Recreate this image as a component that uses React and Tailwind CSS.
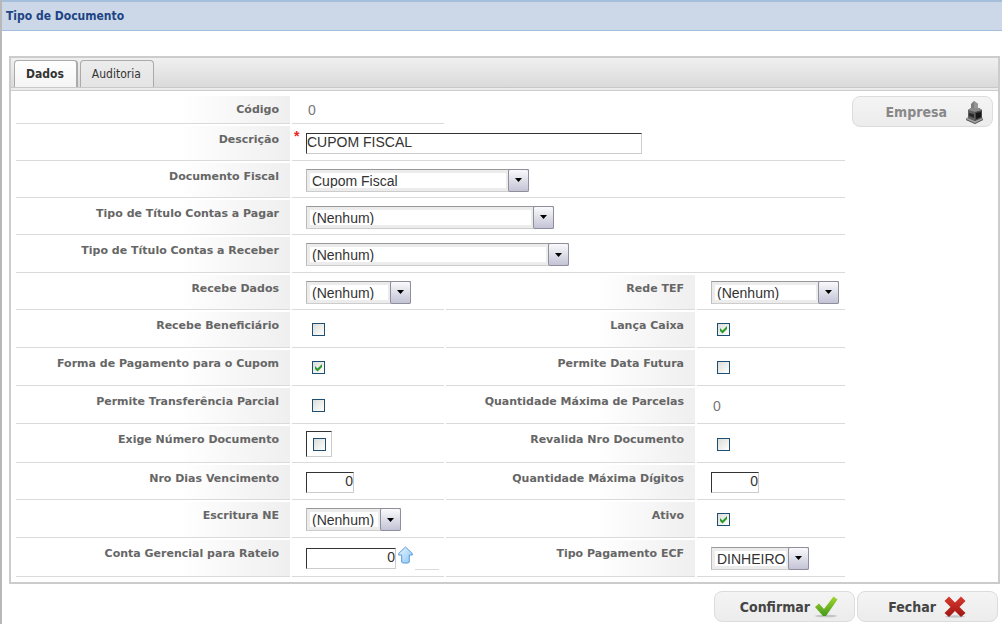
import React, { useState } from 'react';
import clsx from 'clsx';

const Row = ({ height = 'min-h-[35px]', children }) => (
  <div
    className={clsx(
      'grid grid-cols-[minmax(0,274fr)_minmax(0,152fr)_minmax(0,249fr)_minmax(0,148fr)] gap-x-0.5',
      height
    )}
  >
    {children}
  </div>
);

const Label = ({ htmlFor, children }) => (
  <label
    htmlFor={htmlFor}
    className="border-b border-[#dadada] bg-linear-to-r from-white from-60% to-[#efefef] pt-1.5 pr-[11px] text-right font-['Verdana','DejaVu_Sans',sans-serif] text-[11px] leading-4 font-bold whitespace-nowrap text-[#666]"
  >
    {children}
  </label>
);

const Cell = ({ wide, children }) => (
  <div
    className={clsx(
      'relative flex items-center border-b border-[#dadada] pl-3.5',
      wide && 'col-span-3'
    )}
  >
    {children}
  </div>
);

const ReadOnly = ({ id, children }) => (
  <output id={id} className="px-0.5 text-[#777]">
    {children}
  </output>
);

const TextInput = ({ id, value, className }) => (
  <input
    id={id}
    type="text"
    defaultValue={value}
    className={clsx(
      'h-[21px] border border-t-[#333] border-r-[#ccc] border-b-[#ccc] border-l-[#333] bg-white pb-0.5 outline-none',
      className
    )}
  />
);

const Select = ({ id, value, className }) => (
  <span
    className={clsx(
      'relative block h-[23px] border border-[#ccc] border-t-[#999] border-l-[#bbb]',
      className
    )}
  >
    <select
      id={id}
      defaultValue={value}
      className="block h-full w-full appearance-none border-[3px] border-r-[22px] border-[#ececec] bg-white pl-0.5 leading-4 outline-none"
    >
      <option>{value}</option>
    </select>
    <span className="pointer-events-none absolute -top-px -right-px flex h-[23px] w-[21px] items-center justify-center rounded-xs border border-[#8f8f9c] bg-linear-to-b from-[#fafafc] to-[#c3c3d6]">
      <svg width="7" height="4" viewBox="0 0 7 4" aria-hidden="true">
        <path d="M0 0h7L3.5 4z" fill="#000" />
      </svg>
    </span>
  </span>
);

const Checkbox = ({ id, checked, className = 'ml-1.5' }) => (
  <span className={clsx('relative block h-[13px] w-[13px]', className)}>
    <input
      id={id}
      type="checkbox"
      defaultChecked={checked}
      className="peer block h-[13px] w-[13px] appearance-none border border-[#1c4f73] bg-linear-to-br from-[#dcdcd7] to-white"
    />
    <svg
      viewBox="0 0 13 13"
      className="pointer-events-none absolute inset-0 hidden h-[13px] w-[13px] peer-checked:block"
      aria-hidden="true"
    >
      <path d="M3 5v3l2.5 2.5L10 6V3L5.5 7.5z" fill="#2c9a2c" />
    </svg>
  </span>
);

const ActionButton = ({ children, className }) => (
  <button
    type="button"
    className={clsx(
      "flex h-[31px] w-[141px] shrink-0 items-center rounded-lg border border-[#dcdcdc] bg-linear-to-b from-[#f4f4f4] to-[#ececec] font-['Tahoma','DejaVu_Sans_Condensed','DejaVu_Sans',sans-serif] text-sm font-bold",
      className
    )}
  >
    {children}
  </button>
);

const BuildingIcon = () => (
  <svg width="20" height="24" viewBox="0 0 20 24" aria-hidden="true">
    <path d="M1 18l9-4 8 4v2l-8 4-9-4z" fill="#a2a2a2" />
    <path d="M6 4l3-3 4 3v7H6z" fill="#7d7d7d" />
    <path d="M9 1l4 3v7H9z" fill="#969696" />
    <path d="M3 10l3-2h8l3 2v8l-7 3-7-3z" fill="#484848" />
    <path d="M3 10l7 2v9l-7-3z" fill="#606060" />
    <path d="M11 13l5-1v5l-5 2z" fill="#161616" />
    <path d="M4 13l5 1v4l-5-2z" fill="#2b2b2b" />
    <path d="M3 10l3-2h8l3 2-7 2z" fill="#8b8b8b" />
    <path d="M1 19l9 4 8-4v1l-8 4-9-4z" fill="#5a5a5a" />
  </svg>
);

const CheckIcon = () => (
  <svg width="24" height="22" viewBox="0 0 24 22" aria-hidden="true">
    <defs>
      <linearGradient id="ok" x1="0" y1="0" x2="0" y2="1">
        <stop offset="0" stopColor="#a4d62f" />
        <stop offset="1" stopColor="#459a1b" />
      </linearGradient>
    </defs>
    <ellipse cx="12" cy="20" rx="11" ry="1.3" fill="#c4c4c4" />
    <path d="M1 11l4-3.500 5 5.500L19.500 0.500l4 3L12 20H9z" fill="url(#ok)" />
  </svg>
);

const CloseIcon = () => (
  <svg width="22" height="22" viewBox="0 0 22 22" aria-hidden="true">
    <defs>
      <linearGradient id="no" x1="0" y1="0" x2="0" y2="1">
        <stop offset="0" stopColor="#d93a30" />
        <stop offset="1" stopColor="#9c1512" />
      </linearGradient>
    </defs>
    <ellipse cx="11" cy="20.5" rx="10" ry="1.2" fill="#c4c4c4" />
    <path
      d="M5 0.500l6 6 6-6 4.500 4.500-6 6 6 6-4.500 4-6-6-6 6L0.500 17l6-6-6-6z"
      fill="url(#no)"
    />
  </svg>
);

const UpIcon = () => (
  <svg width="15" height="18" viewBox="0 0 15 18" aria-hidden="true">
    <defs>
      <linearGradient id="up" x1="0" y1="0" x2="1" y2="1">
        <stop offset="0" stopColor="#eaf6ff" />
        <stop offset="1" stopColor="#8cc6f4" />
      </linearGradient>
    </defs>
    <path
      d="M7.500 1L14.300 7.500V9h-3V16l-1 1H4.700l-1-1V9H0.700V7.500z"
      fill="url(#up)"
      stroke="#5499dc"
      strokeLinejoin="round"
    />
  </svg>
);

const TABS = ['Dados', 'Auditoria'];

export default function App() {
  const [tab, setTab] = useState('Dados');

  return (
    <div className="min-h-screen border-l-2 border-[#b8b8b8] bg-white font-['Arial','Liberation_Sans',sans-serif] text-sm text-[#333]">
      <header className="border-t-2 border-b border-[#a3bfdc] bg-[#ccd8e8] pb-1">
        <h1 className="pt-1 pl-1 font-['Tahoma','DejaVu_Sans_Condensed','DejaVu_Sans',sans-serif] text-xs leading-5 font-bold text-[#1d4585]">
          Tipo de Documento
        </h1>
      </header>

      <main className="pt-[25px] pr-0.5 pl-[7px]">
        <section className="border-2 border-[#ccc]">
          <div
            role="tablist"
            className="flex h-[30px] items-end gap-0.5 border-b border-[#c8c8c8] bg-linear-to-b from-[#f0f0f0] to-[#dadada] pl-[3px] font-['Tahoma','DejaVu_Sans_Condensed','DejaVu_Sans',sans-serif] text-xs"
          >
            {TABS.map((name) => (
              <button
                key={name}
                type="button"
                role="tab"
                aria-selected={tab === name}
                onClick={() => setTab(name)}
                className={clsx(
                  'h-[27px] rounded-t-sm border border-b-0 border-[#aaa] pr-3 pl-[11px]',
                  tab === name
                    ? 'border-r-2 bg-linear-to-b from-white to-[#f4f4f4] font-bold'
                    : 'bg-linear-to-b from-[#ececec] to-[#e4e4e4]'
                )}
              >
                {name}
              </button>
            ))}
          </div>
          <div className="h-[3px] border-b border-[#ccc] bg-[#ececec]" />

          <form className="flex items-start gap-[7px] p-[5px]">
            <div className="flex min-w-0 flex-1 flex-col gap-0.5">
              <Row height="min-h-7">
                <Label htmlFor="codigo">Código</Label>
                <Cell>
                  <ReadOnly id="codigo">0</ReadOnly>
                </Cell>
              </Row>
              <Row>
                <Label htmlFor="descricao">Descrição</Label>
                <Cell wide>
                  <span className="absolute top-0 left-0.5 text-sm leading-5 font-bold text-[#e22]">
                    *
                  </span>
                  <TextInput id="descricao" value="CUPOM FISCAL" className="w-[336px]" />
                </Cell>
              </Row>
              <Row>
                <Label htmlFor="docFiscal">Documento Fiscal</Label>
                <Cell wide>
                  <Select id="docFiscal" value="Cupom Fiscal" className="w-[223px]" />
                </Cell>
              </Row>
              <Row>
                <Label htmlFor="pagar">Tipo de Título Contas a Pagar</Label>
                <Cell wide>
                  <Select id="pagar" value="(Nenhum)" className="w-[248px]" />
                </Cell>
              </Row>
              <Row height="min-h-9">
                <Label htmlFor="receber">Tipo de Título Contas a Receber</Label>
                <Cell wide>
                  <Select id="receber" value="(Nenhum)" className="w-[263px]" />
                </Cell>
              </Row>
              <Row>
                <Label htmlFor="recebeDados">Recebe Dados</Label>
                <Cell>
                  <Select id="recebeDados" value="(Nenhum)" className="w-[105px]" />
                </Cell>
                <Label htmlFor="redeTef">Rede TEF</Label>
                <Cell>
                  <Select id="redeTef" value="(Nenhum)" className="w-32" />
                </Cell>
              </Row>
              <Row height="min-h-9">
                <Label htmlFor="beneficiario">Recebe Beneficiário</Label>
                <Cell>
                  <Checkbox id="beneficiario" />
                </Cell>
                <Label htmlFor="lancaCaixa">Lança Caixa</Label>
                <Cell>
                  <Checkbox id="lancaCaixa" checked />
                </Cell>
              </Row>
              <Row height="min-h-9">
                <Label htmlFor="formaPagamento">Forma de Pagamento para o Cupom</Label>
                <Cell>
                  <Checkbox id="formaPagamento" checked />
                </Cell>
                <Label htmlFor="dataFutura">Permite Data Futura</Label>
                <Cell>
                  <Checkbox id="dataFutura" />
                </Cell>
              </Row>
              <Row height="min-h-9">
                <Label htmlFor="transferencia">Permite Transferência Parcial</Label>
                <Cell>
                  <Checkbox id="transferencia" />
                </Cell>
                <Label htmlFor="parcelas">Quantidade Máxima de Parcelas</Label>
                <Cell>
                  <ReadOnly id="parcelas">0</ReadOnly>
                </Cell>
              </Row>
              <Row height="min-h-[37px]">
                <Label htmlFor="exigeNumero">Exige Número Documento</Label>
                <Cell>
                  <span className="flex h-[26px] w-[26px] items-center justify-center border border-t-[#333] border-r-[#ccc] border-b-[#ccc] border-l-[#333]">
                    <Checkbox id="exigeNumero" className="ml-0" />
                  </span>
                </Cell>
                <Label htmlFor="revalida">Revalida Nro Documento</Label>
                <Cell>
                  <Checkbox id="revalida" />
                </Cell>
              </Row>
              <Row>
                <Label htmlFor="diasVencimento">Nro Dias Vencimento</Label>
                <Cell>
                  <TextInput id="diasVencimento" value="0" className="w-12 text-right" />
                </Cell>
                <Label htmlFor="digitos">Quantidade Máxima Dígitos</Label>
                <Cell>
                  <TextInput id="digitos" value="0" className="w-12 text-right" />
                </Cell>
              </Row>
              <Row height="min-h-9">
                <Label htmlFor="escritura">Escritura NE</Label>
                <Cell>
                  <Select id="escritura" value="(Nenhum)" className="w-[95px]" />
                </Cell>
                <Label htmlFor="ativo">Ativo</Label>
                <Cell>
                  <Checkbox id="ativo" checked />
                </Cell>
              </Row>
              <Row height="min-h-[37px]">
                <Label htmlFor="rateio">Conta Gerencial para Rateio</Label>
                <Cell>
                  <TextInput id="rateio" value="0" className="w-[90px] text-right" />
                  <button type="button" aria-label="Selecionar conta" className="mb-1.5 ml-0.5">
                    <UpIcon />
                  </button>
                  <span className="ml-0.5 h-6 w-6 border-b border-[#dadada]" />
                </Cell>
                <Label htmlFor="pagamentoEcf">Tipo Pagamento ECF</Label>
                <Cell>
                  <Select id="pagamentoEcf" value="DINHEIRO" className="w-[98px]" />
                </Cell>
              </Row>
            </div>

            <ActionButton className="justify-end gap-[18px] pr-[7px] text-[#888]">
              Empresa <BuildingIcon />
            </ActionButton>
          </form>
        </section>

        <footer className="flex justify-end gap-0.5 pt-[7px] pr-0.5">
          <ActionButton className="justify-end gap-1 pr-4 text-[#444]">
            Confirmar <CheckIcon />
          </ActionButton>
          <ActionButton className="justify-end gap-2 pr-[31px] text-[#444]">
            Fechar <CloseIcon />
          </ActionButton>
        </footer>
      </main>
    </div>
  );
}
